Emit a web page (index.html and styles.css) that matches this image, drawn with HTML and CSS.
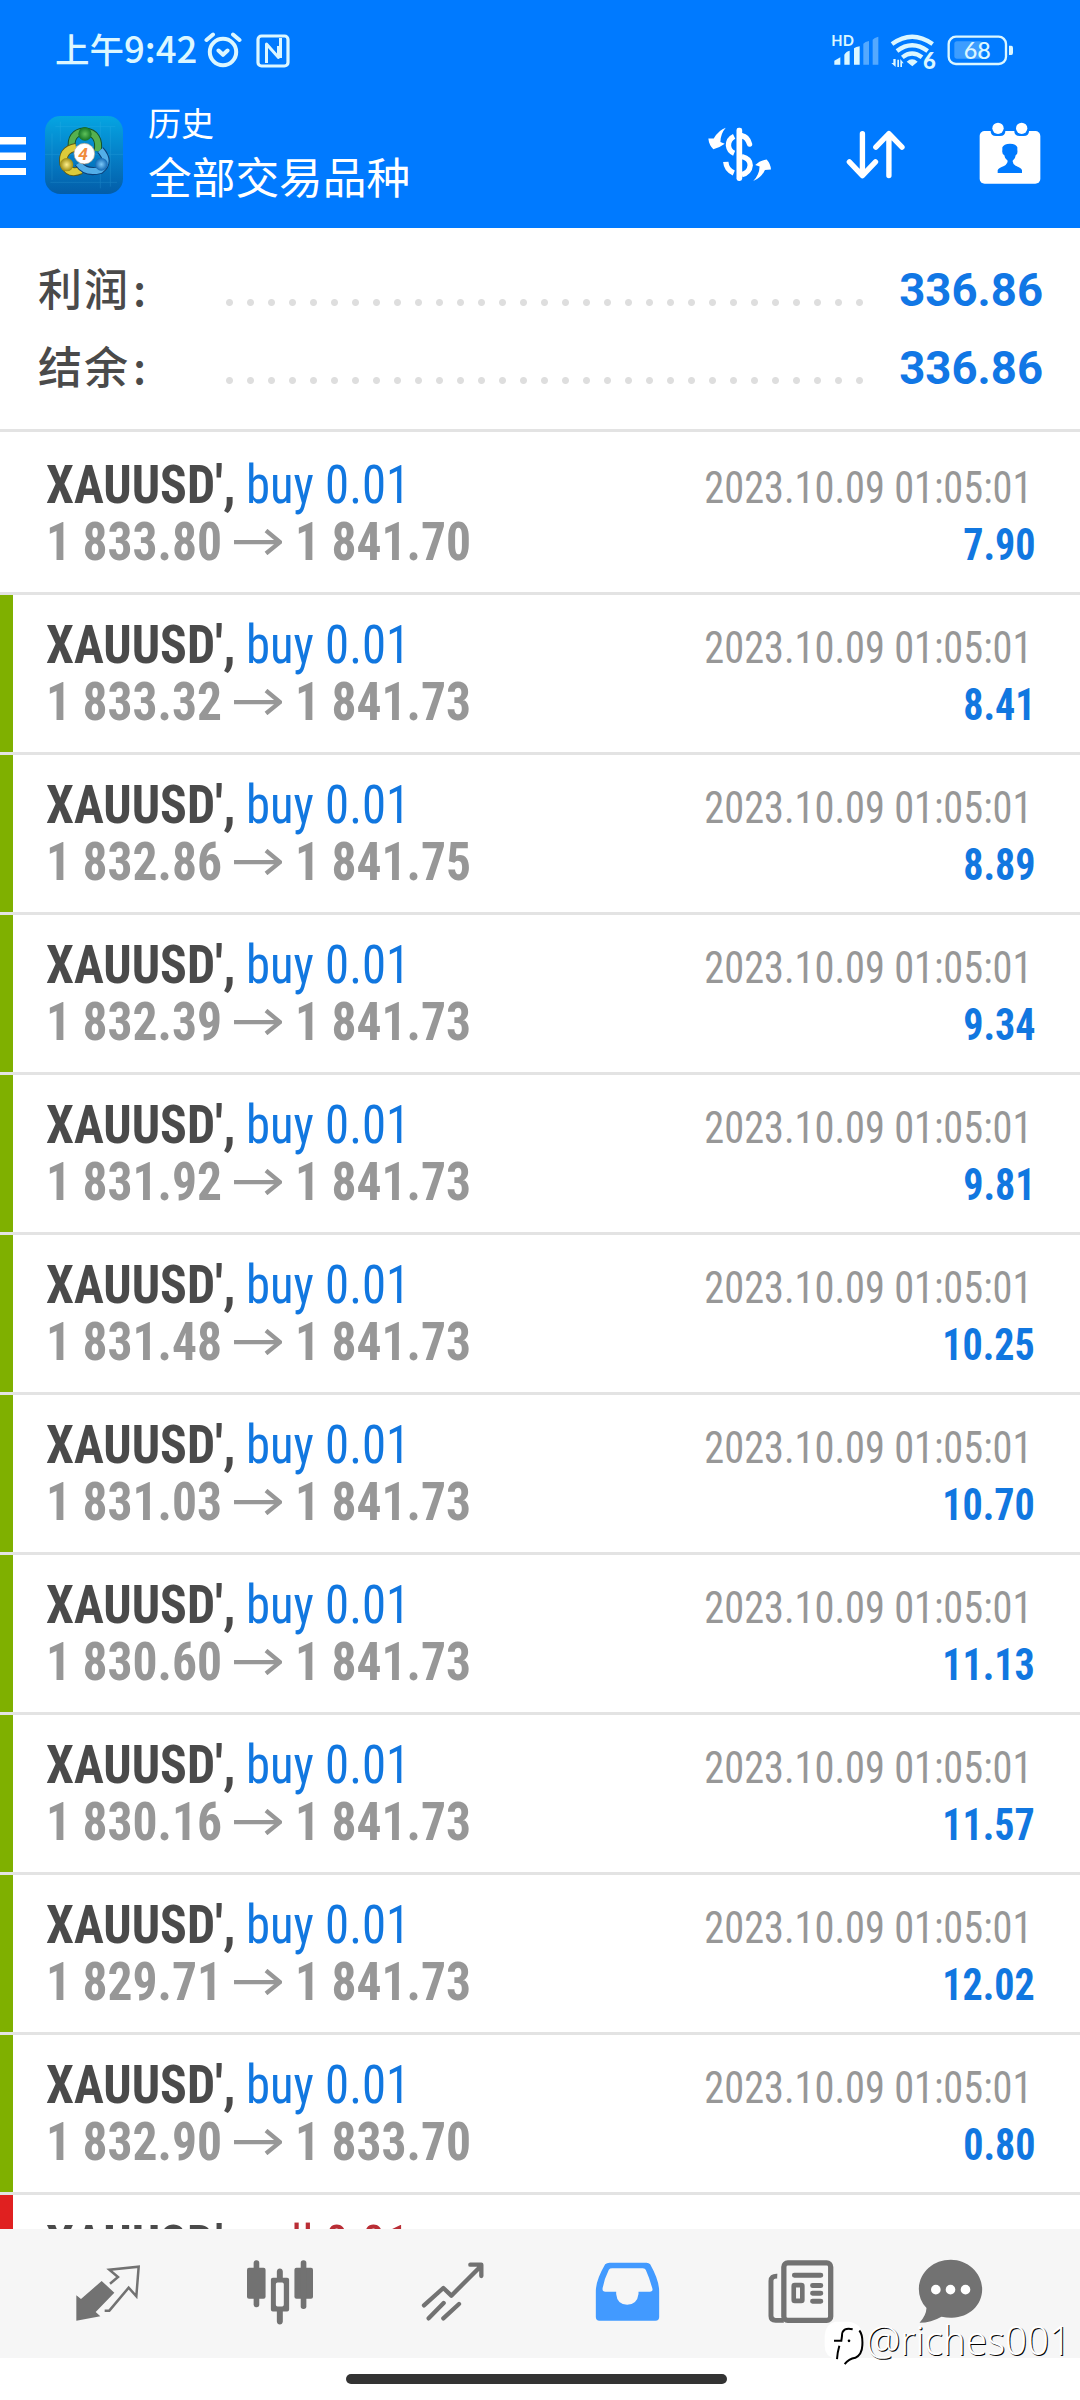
FILE: index.html
```html
<!DOCTYPE html>
<html lang="zh-CN">
<head>
<meta charset="utf-8">
<title>历史</title>
<link rel="stylesheet" href="styles.css">
</head>
<body>
<header class="header">
  <div class="status">
    <div class="clock"><span class="ampm">上午</span><span class="time">9:42</span></div>
    <svg class="alarm" viewBox="0 0 38 36" fill="none" stroke="currentColor" stroke-width="4" stroke-linecap="round" stroke-linejoin="round"><circle cx="19" cy="20" r="13.2"/><path d="M2.5 8 9 2.5M35.5 8 29 2.5M14.5 18.5l4.5 4.3 4.500-4.300"/></svg>
    <svg class="nfc" viewBox="0 0 34 34" fill="none" stroke="currentColor" stroke-width="3.200" stroke-linejoin="round"><rect x="2" y="2" width="30" height="30" rx="3.500"/><path d="M10.500 29V10L22.500 23.500V12M24.500 4V24" stroke-width="3"/></svg>
    <svg class="indicators" viewBox="32 28 552 114" fill="currentColor">
      <g class="hd"><text x="33" y="68">HD</text></g>
      <path d="M42 123v-12l18-10v22zM72 123V93q6-11 16-12v42zM101 123V74q6-5 17-6v55z"/>
      <path opacity=".38" d="M129 123V60q5-6 17-8v71zM157 123V48q5-6 17-9v84z"/>
      <g fill="none" stroke="currentColor" stroke-width="13"><path d="M215 61Q275 17 337 61M230 82Q275 47 322 82M246 101Q275 78 305 101"/></g>
      <path d="M259 114q16-14 33 0l-16 14zM219 106h7v24l-13-12h6zM231 108h5v22h-5zM240 106l10 13h-5v11h-5z"/>
      <g class="six"><text x="308" y="136">6</text></g>
      <rect x="385" y="39" width="172" height="82" rx="22" fill="none" stroke="currentColor" stroke-width="7"/>
      <rect x="402" y="53" width="84" height="52" rx="8" opacity=".28"/>
      <path d="M566 66h7q5 0 5 7v14q0 7-5 7h-7z"/>
      <g class="charge"><text x="430" y="105">68</text></g>
    </svg>
  </div>
  <div class="toolbar">
    <svg class="menu" viewBox="0 0 26 38" fill="#fff"><path d="M0 0h26v7.500H0zM0 15.500h26v7.500H0zM0 31h26v7H0z"/></svg>
    <svg class="logo" viewBox="134 78 234 234">
      <defs>
        <linearGradient id="sky" x1="0" y1="0" x2="0" y2="1"><stop offset="0" stop-color="#05a5e2"/><stop offset=".5" stop-color="#0580c8"/><stop offset="1" stop-color="#035da8"/></linearGradient>
        <radialGradient id="green"><stop offset="0" stop-color="#5fc25a"/><stop offset="1" stop-color="#147526"/></radialGradient>
        <radialGradient id="gold"><stop offset="0" stop-color="#fff08a"/><stop offset="1" stop-color="#9c8a10"/></radialGradient>
        <radialGradient id="azure"><stop offset="0" stop-color="#7cc8f8"/><stop offset="1" stop-color="#1268b4"/></radialGradient>
      </defs>
      <rect x="134" y="78" width="234" height="234" rx="46" fill="url(#sky)"/>
      <path d="M134 193h234M150 277h200M165 110h180M300 95v200M330 110v180M180 95v60M155 130v140" stroke="#4fc3f0" stroke-width="2" opacity=".25"/>
      <g fill="none">
        <path d="M215 178Q207 128 253 124Q301 130 292 184" stroke="#14532d" stroke-width="24"/><path d="M215 178Q207 128 253 124Q301 130 292 184" stroke="#55b04f" stroke-width="18"/>
        <path d="M227 172Q183 180 190 222Q206 256 242 240" stroke="#5d5a16" stroke-width="26"/><path d="M227 172Q183 180 190 222Q206 256 242 240" stroke="#dccb3a" stroke-width="20"/>
        <path d="M234 220Q256 252 300 240Q332 216 300 180" stroke="#0b3f78" stroke-width="24"/><path d="M234 220Q256 252 300 240Q332 216 300 180" stroke="#52aee8" stroke-width="18"/>
      </g>
      <circle cx="254" cy="132" r="20" fill="url(#green)"/><circle cx="199" cy="224" r="20" fill="url(#gold)"/><circle cx="303" cy="223" r="19" fill="url(#azure)"/>
      <circle cx="252" cy="191" r="31" fill="#fff" stroke="#b9a58a" stroke-width="2"/>
      <g class="four"><text x="234" y="210">4</text></g>
    </svg>
    <div class="titles"><div class="section">历史</div><div class="symbols">全部交易品种</div></div>
    <svg class="currency" viewBox="22 52 194 164" fill="#fff">
      <rect x="110" y="54" width="17" height="159" rx="7"/>
      <g fill="none" stroke="#fff" stroke-width="16"><path d="M103 80Q86 88 86 107Q88 124 103 130M78 156Q80 180 102 189" /><path d="M126 78Q143 81 149 103" stroke-linecap="round"/><path d="M126 140Q151 146 151 166Q149 188 126 194"/></g>
      <path d="M78 54Q58 60 42 86L26 86Q28 106 41 118Q58 115 75 102L62 97Q62 72 78 54zM160 213Q184 204 195 180L213 179Q212 162 200 149Q181 152 166 165L179 170Q178 196 160 213z"/>
    </svg>
    <svg class="sort" viewBox="438 60 176 146" fill="none" stroke="#fff" stroke-width="16" stroke-linecap="round" stroke-linejoin="round"><path d="M487 71V196M448 155l39 41 39-41M566 196V71M527 111l39-40 39 40"/></svg>
    <svg class="calendar" viewBox="838 36 186 186">
      <rect x="840" y="63" width="182" height="158" rx="15" fill="#fff"/>
      <path d="M873 62h44v2q0 14-16 14h-12q-16 0-16-14zM944 62h44v2q0 14-16 14h-12q-16 0-16-14z" fill="#007aff"/>
      <circle cx="895" cy="55" r="17" fill="#fff"/><circle cx="966" cy="55" r="17" fill="#fff"/>
      <path d="M894 189V181Q897 173 913 168Q924 161 924 152Q914 145 914 136Q906 132 908 120V112Q912 102 931 101Q950 102 953 112V120Q955 132 948 136Q948 145 939 152Q938 161 949 168Q965 173 967 181V189z" fill="#007aff"/>
    </svg>
  </div>
</header>
<svg class="defs"><symbol id="arrow" viewBox="0 0 48 26"><path d="M0 13.200H45M32 1.500 46 13.200 32 24.500" fill="none" stroke="#979797" stroke-width="4.300"/></symbol></svg>
<main class="main">
  <section class="summary">
    <div class="total"><span class="label">利润<i>:</i></span><span class="dots"></span><span class="sum">336.86</span></div>
    <div class="total"><span class="label">结余<i>:</i></span><span class="dots"></span><span class="sum">336.86</span></div>
  </section>
  <section class="deals">
    <article class="deal"><div class="line"><b class="name">XAUUSD',</b><span class="side">buy 0.01</span><time>2023.10.09 01:05:01</time></div><div class="line"><span class="price">1 833.80</span><svg class="arrow"><use href="#arrow"/></svg><span class="price">1 841.70</span><span class="profit">7.90</span></div></article>
    <article class="deal tp"><div class="line"><b class="name">XAUUSD',</b><span class="side">buy 0.01</span><time>2023.10.09 01:05:01</time></div><div class="line"><span class="price">1 833.32</span><svg class="arrow"><use href="#arrow"/></svg><span class="price">1 841.73</span><span class="profit">8.41</span></div></article>
    <article class="deal tp"><div class="line"><b class="name">XAUUSD',</b><span class="side">buy 0.01</span><time>2023.10.09 01:05:01</time></div><div class="line"><span class="price">1 832.86</span><svg class="arrow"><use href="#arrow"/></svg><span class="price">1 841.75</span><span class="profit">8.89</span></div></article>
    <article class="deal tp"><div class="line"><b class="name">XAUUSD',</b><span class="side">buy 0.01</span><time>2023.10.09 01:05:01</time></div><div class="line"><span class="price">1 832.39</span><svg class="arrow"><use href="#arrow"/></svg><span class="price">1 841.73</span><span class="profit">9.34</span></div></article>
    <article class="deal tp"><div class="line"><b class="name">XAUUSD',</b><span class="side">buy 0.01</span><time>2023.10.09 01:05:01</time></div><div class="line"><span class="price">1 831.92</span><svg class="arrow"><use href="#arrow"/></svg><span class="price">1 841.73</span><span class="profit">9.81</span></div></article>
    <article class="deal tp"><div class="line"><b class="name">XAUUSD',</b><span class="side">buy 0.01</span><time>2023.10.09 01:05:01</time></div><div class="line"><span class="price">1 831.48</span><svg class="arrow"><use href="#arrow"/></svg><span class="price">1 841.73</span><span class="profit">10.25</span></div></article>
    <article class="deal tp"><div class="line"><b class="name">XAUUSD',</b><span class="side">buy 0.01</span><time>2023.10.09 01:05:01</time></div><div class="line"><span class="price">1 831.03</span><svg class="arrow"><use href="#arrow"/></svg><span class="price">1 841.73</span><span class="profit">10.70</span></div></article>
    <article class="deal tp"><div class="line"><b class="name">XAUUSD',</b><span class="side">buy 0.01</span><time>2023.10.09 01:05:01</time></div><div class="line"><span class="price">1 830.60</span><svg class="arrow"><use href="#arrow"/></svg><span class="price">1 841.73</span><span class="profit">11.13</span></div></article>
    <article class="deal tp"><div class="line"><b class="name">XAUUSD',</b><span class="side">buy 0.01</span><time>2023.10.09 01:05:01</time></div><div class="line"><span class="price">1 830.16</span><svg class="arrow"><use href="#arrow"/></svg><span class="price">1 841.73</span><span class="profit">11.57</span></div></article>
    <article class="deal tp"><div class="line"><b class="name">XAUUSD',</b><span class="side">buy 0.01</span><time>2023.10.09 01:05:01</time></div><div class="line"><span class="price">1 829.71</span><svg class="arrow"><use href="#arrow"/></svg><span class="price">1 841.73</span><span class="profit">12.02</span></div></article>
    <article class="deal tp"><div class="line"><b class="name">XAUUSD',</b><span class="side">buy 0.01</span><time>2023.10.09 01:05:01</time></div><div class="line"><span class="price">1 832.90</span><svg class="arrow"><use href="#arrow"/></svg><span class="price">1 833.70</span><span class="profit">0.80</span></div></article>
    <article class="deal sl"><div class="line"><b class="name">XAUUSD',</b><span class="side sell">sell 0.01</span></div></article>
  </section>
</main>
<nav class="nav">
  <svg class="quotes" viewBox="47 28 192 198"><path d="M48 137l14 11 62-54 38 35-56 58 14 13-72 13z" fill="#727272"/><path d="M149 102l24-20-26-22 88-9-7 89-23-26-58 69h-14" fill="none" stroke="#727272" stroke-width="7.500"/></svg>
  <svg class="candles" viewBox="561 28 199 198" fill="#727272"><rect x="561" y="54" width="56" height="93" rx="6"/><rect x="581" y="31" width="17" height="142" rx="8"/><rect x="704" y="54" width="56" height="93" rx="6"/><rect x="723" y="31" width="17" height="147" rx="8"/><path d="M651 84V65q1-9 9-9t9 9v19h13q6 0 6 6v90q0 6-6 6h-13v30q-1 9-9 9t-9-9v-30h-12q-6 0-6-6V90q0-6 6-6zM653 98q-5 0-5 6v61q0 6 5 6h14q5 0 5-6v-61q0-6-5-6z"/></svg>
  <svg class="trade" viewBox="1084 28 192 198" fill="none" stroke="#727272" stroke-width="13" stroke-linecap="round" stroke-linejoin="round"><path d="M1093 167l58-52 24 23 89-89M1232 45h33v34M1107 206l45-46M1151 206l47-43"/></svg>
  <svg class="inbox" viewBox="44 28 194 198"><path fill="#429aff" fill-rule="evenodd" d="M87 39H198Q205 39 209 44Q236 92 236 125V202Q236 213 225 213H57Q46 213 46 202V125Q46 92 74 44Q79 39 87 39zM95 56Q88 56 85 60Q70 90 66 118Q66 126 75 126H107V133Q110 165 140 165Q170 165 174 133V126H208Q217 126 216 118Q207 85 196 61Q194 56 187 56z"/></svg>
  <svg class="news" viewBox="565 28 200 198" fill="none" stroke="#727272"><rect x="613" y="39" width="142" height="174" rx="12" stroke-width="16"/><path d="M593 79q-19-1-19 15v106q0 13 14 13h25" stroke-width="15"/><g stroke-width="15" stroke-linecap="round"><path d="M645 76h80M700 107h25M700 131h25M700 155h25"/></g><rect x="643" y="106" width="26" height="48" rx="3" stroke-width="14"/></svg>
  <svg class="chat" viewBox="1016 28 194 198"><path d="M1114 30C1165 30 1208 70 1208 119C1208 168 1166 206 1114 204Q1101 204 1086 201Q1055 219 1020 219Q1040 198 1041 175Q1018 152 1018 118C1019 67 1062 30 1114 30z" fill="#727272"/><g fill="#fff"><circle cx="1069" cy="120" r="14.500"/><circle cx="1113" cy="120" r="14.500"/><circle cx="1158" cy="120" r="14.500"/></g></svg>
</nav>
<footer class="home"><div class="bar"></div></footer>
<div class="mark">
  <svg viewBox="732 212 120 134"><path d="M766 214H806Q847 219 850 262V285Q848 325 808 332L792 345L788 329L768 326Q734 319 734 286V256Q735 221 766 214z" fill="#fff"/><path d="M818 236Q786 229 786 256L784 271H762M778 286Q772 307 771 326M838 240Q849 253 847 285Q846 312 826 322Q806 325 794 341" fill="none" stroke="#000" stroke-width="6"/><circle cx="807" cy="271" r="4"/></svg>
  <span>@riches001</span>
</div>
</body>
</html>
```
FILE: styles.css
```css
* { box-sizing: border-box; }

body {
  margin: 0;
  width: 1080px;
  height: 2400px;
  overflow: hidden;
  position: relative;
  background: #fff;
  display: flex;
  flex-direction: column;
  font-family: Roboto, "Noto Sans CJK SC", sans-serif;
}

svg { display: block; flex: none; }
.defs { display: none; }

/* Header */
.header {
  height: 228px;
  flex: none;
  background: #007aff;
  color: #fff;
}

.status {
  height: 100px;
  padding: 32px 65px 0 55px;
  display: flex;
  align-items: flex-start;
  color: #dcf7ff;
  font-family: "Noto Sans CJK SC", sans-serif;
  font-weight: 500;
}
.clock { display: flex; align-items: baseline; line-height: 36px; width: 149px; margin-top: -2px; white-space: nowrap; }
.ampm { font-size: 34.5px; }
.time { font-size: 36.5px; }
.alarm { width: 38px; height: 36px; }
.nfc { width: 34px; height: 34px; margin: 2px 0 0 14px; }
.indicators { width: 184px; height: 38px; margin: 1px 0 0 auto; }
.hd { font: 700 44px Lato, sans-serif; }
.six { font: 900 66px Lato, sans-serif; }
.charge { font: 500 70px Lato, sans-serif; }

.toolbar { height: 128px; display: flex; align-items: flex-start; }
.menu { width: 26px; height: 38px; margin-top: 37px; }
.logo { width: 78px; height: 78px; margin: 16px 0 0 19px; }
.four { font: italic 700 52px Roboto, sans-serif; fill: #f08b3c; }
.titles { margin: -2px auto 0 25px; font-family: "Noto Sans CJK SC", sans-serif; white-space: nowrap; }
.section { font-size: 33px; line-height: 48px; }
.symbols { font-size: 43.7px; line-height: 58px; }
.currency { width: 65px; height: 55px; margin-top: 27px; }
.sort { width: 59px; height: 49px; margin: 30px 0 0 74px; }
.calendar { width: 62px; height: 62px; margin: 22px 39px 0 74px; }

/* Totals */
.main { height: 2001px; flex: none; overflow: hidden; }
.summary { height: 204px; padding-top: 20px; border-bottom: 3px solid #e3e3e3; }
.total { height: 78px; display: flex; align-items: baseline; padding: 0 37px 0 38px; line-height: 78px; }
.label {
  width: 181px;
  font-family: "Noto Sans CJK SC", sans-serif;
  font-size: 44px;
  font-weight: 500;
  letter-spacing: 2px;
  color: #4a4a4a;
}
.label i { font-style: normal; margin-left: 3px; }
.dots {
  width: 651px;
  align-self: stretch;
  background: radial-gradient(circle at 10.5px 54.5px, #dedede 3px, transparent 4px) 0 0 / 21px 78px repeat-x;
}
.sum { margin-left: auto; font-size: 45.5px; font-weight: 700; color: #1177e5; }

/* Deals */
.deals { padding-top: 3px; }
.deal {
  height: 160px;
  padding: 21.500px 45px 0 46px;
  border-bottom: 3px solid #e3e3e3;
  font-family: "Roboto Condensed", Roboto, sans-serif;
  font-size: 53px;
  line-height: 57px;
  white-space: pre;
}
.tp { background: linear-gradient(#7fb000, #7fb000) 0 0 / 13px 100% no-repeat padding-box; }
.sl { background: linear-gradient(#e02020, #e02020) 0 0 / 13px 100% no-repeat padding-box; }
.line { height: 57px; display: flex; align-items: baseline; }
.name { width: 200px; color: #4a4a4a; transform: scaleX(.94); transform-origin: 0 0; }
.side { color: #1177e0; transform: scaleX(.92); transform-origin: 0 0; }
.sell { color: #b92d35; }
.price { width: 173px; font-weight: 700; color: #979797; transform: scaleX(.935); transform-origin: 0 0; }
.arrow { width: 48px; height: 26px; align-self: flex-start; margin: 15px 13px 0 15px; }
time { margin: 0 3px 0 auto; font-size: 43.700px; color: #979797; transform: scaleX(.923); transform-origin: 100% 0; }
.profit { margin-left: auto; font-size: 44px; font-weight: 700; color: #1177e0; transform: scaleX(.91); transform-origin: 100% 0; }

/* Bottom navigation */
.nav { height: 129px; flex: none; display: flex; padding: 30px 0 0 76px; background: #f6f6f6; }
.nav svg { height: 66px; }
.quotes { width: 64px; }
.candles { width: 66px; margin-left: 107px; }
.trade { width: 64px; margin-left: 108px; }
.inbox { width: 65px; margin-left: 110px; }
.news { width: 66px; margin-left: 108px; }
.chat { width: 65px; margin-left: 84px; }

.home { height: 42px; display: flex; justify-content: center; padding: 16px 8px 0 0; }
.bar { width: 381px; height: 10px; border-radius: 5px; background: #333; }

/* Author mark laid over the navigation */
.mark {
  position: absolute;
  left: 824px;
  top: 2321px;
  display: flex;
  align-items: flex-start;
  font: 300 41px/46px "Noto Sans", sans-serif;
  color: #fff;
  text-shadow: 1px 1px 0 #000;
  white-space: nowrap;
}
.mark svg { width: 40px; height: 45px; }
.mark span { width: 205px; margin: -5px 0 0 2px; transform: scaleX(.94); transform-origin: 0 0; }
```
